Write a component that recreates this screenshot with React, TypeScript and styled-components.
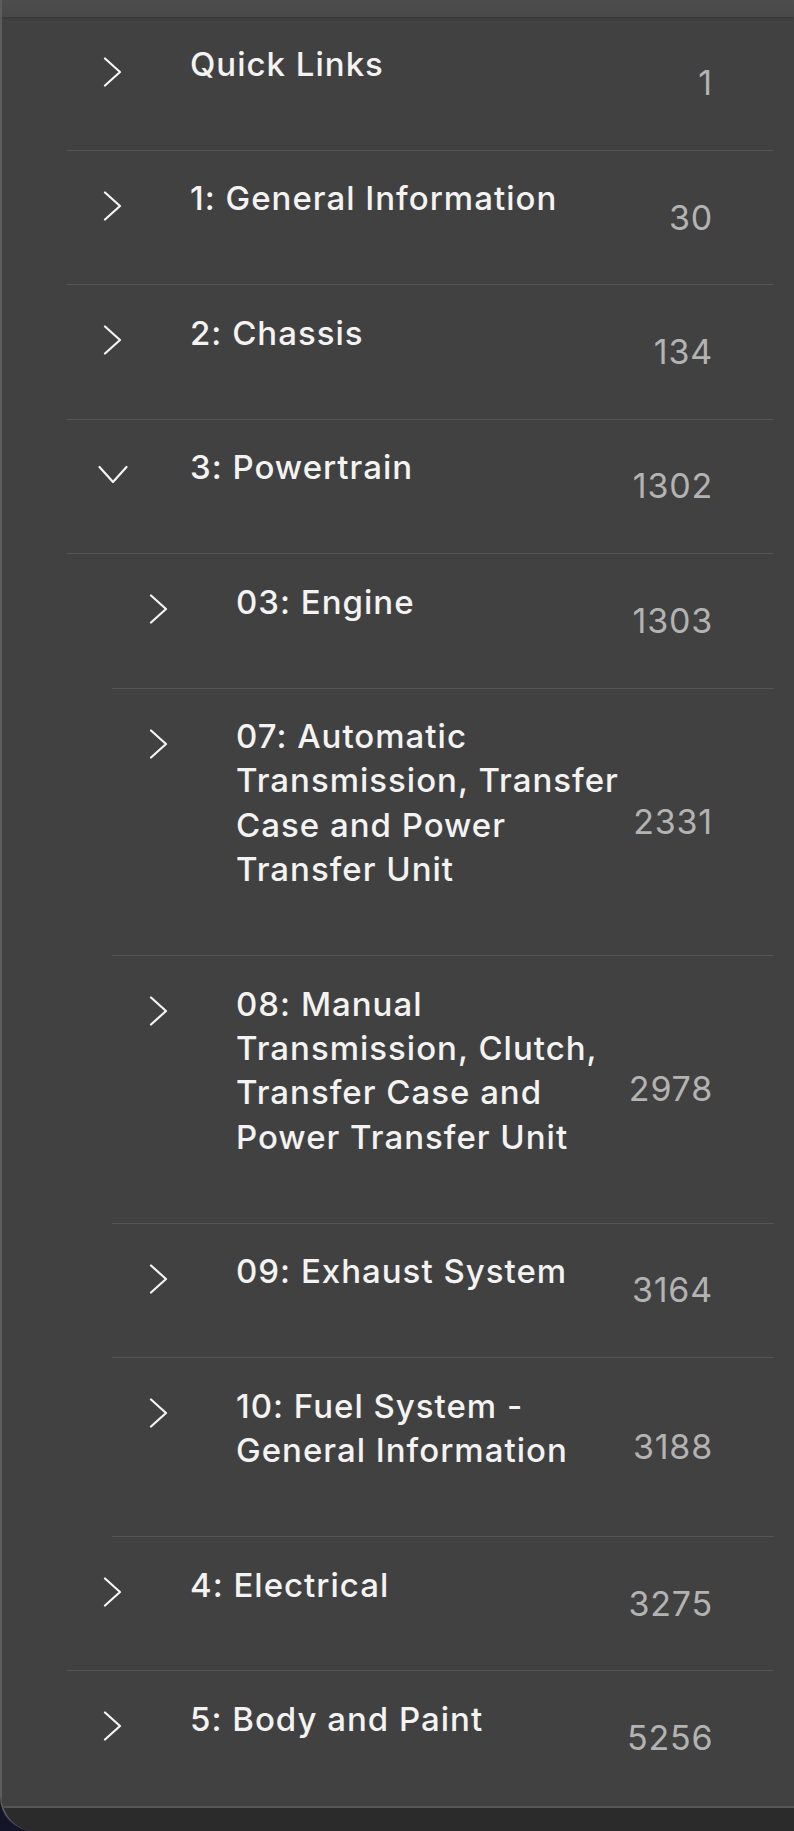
import React from 'react';
import styled, { createGlobalStyle } from 'styled-components';

const GlobalStyle = createGlobalStyle`
    html, body {
        margin: 0;
        padding: 0;
        background: #15152a;
    }
    * {
        box-sizing: border-box;
    }
`;

type Entry = {
    label: string;
    page: string;
    level: number;
    open?: boolean;
};

const entries: Entry[] = [
    { label: 'Quick Links', page: '1', level: 0 },
    { label: '1: General Information', page: '30', level: 0 },
    { label: '2: Chassis', page: '134', level: 0 },
    { label: '3: Powertrain', page: '1302', level: 0, open: true },
    { label: '03: Engine', page: '1303', level: 1 },
    { label: '07: Automatic Transmission, Transfer Case and Power Transfer Unit', page: '2331', level: 1 },
    { label: '08: Manual Transmission, Clutch, Transfer Case and Power Transfer Unit', page: '2978', level: 1 },
    { label: '09: Exhaust System', page: '3164', level: 1 },
    { label: '10: Fuel System - General Information', page: '3188', level: 1 },
    { label: '4: Electrical', page: '3275', level: 0 },
    { label: '5: Body and Paint', page: '5256', level: 0 },
];

const Chevron = ({ open }: { open?: boolean }) => (
    <ChevronBox $open={open}>
        <svg width="30" height="30" viewBox="0 0 30 30" fill="none">
            <polyline
                points="7,1.5 22,15 7,28.5"
                stroke="#f4f4f4"
                strokeWidth="2.2"
                strokeLinecap="round"
                strokeLinejoin="round"
            />
        </svg>
    </ChevronBox>
);

const App = () => {
    return (
        <Frame>
            <GlobalStyle />
            <Panel>
                <TitleStrip />
                <List>
                    {entries.map((e, i) => (
                        <Row key={i} $level={e.level} $last={i === entries.length - 1}>
                            <Chevron open={e.open} />
                            <Label>{e.label}</Label>
                            <Page>{e.page}</Page>
                        </Row>
                    ))}
                </List>
            </Panel>
        </Frame>
    );
};

export default App;

const Frame = styled.div`
    width: 794px;
    height: 1831px;
    background: #2b2b2b;
    border-left: 2px solid #5c5c5c;
    border-bottom-left-radius: 34px;
    overflow: hidden;
    font-family: Inter, 'Noto Sans', sans-serif;
`;

const Panel = styled.div`
    background: #414141;
    border-bottom: 2px solid #575757;
`;

const TitleStrip = styled.div`
    height: 16.5px;
    background: linear-gradient(#4d4d4d, #484848);
    box-shadow: 0 1px 2px rgba(0, 0, 0, 0.18);
`;

const List = styled.div`
    display: flex;
    flex-direction: column;
`;

const Row = styled.div<{ $level: number; $last?: boolean }>`
    display: flex;
    align-items: flex-start;
    margin-left: ${(p) => (p.$level > 0 ? 110 : 64)}px;
    margin-right: 20px;
    padding-right: 61px;
    border-bottom: 1px solid ${(p) => (p.$last ? 'transparent' : '#555555')};
`;

const ChevronBox = styled.div<{ $open?: boolean }>`
    flex: none;
    width: 30px;
    height: 30px;
    margin: 40px 0 0 32px;
    transform: ${(p) => (p.$open ? 'rotate(90deg)' : 'none')};

    svg {
        display: block;
    }
`;

const Label = styled.div`
    flex: 1;
    min-width: 0;
    margin-left: 62px;
    padding: 25.5px 0 63.5px;
    font-size: 33px;
    font-weight: 500;
    line-height: 44.4px;
    color: #f3f3f3;
    letter-spacing: 1px;
`;

const Page = styled.div`
    flex: none;
    width: 86px;
    align-self: center;
    text-align: right;
    font-size: 34px;
    line-height: 40px;
    letter-spacing: 0.8px;
    color: #b3b3b3;
`;
